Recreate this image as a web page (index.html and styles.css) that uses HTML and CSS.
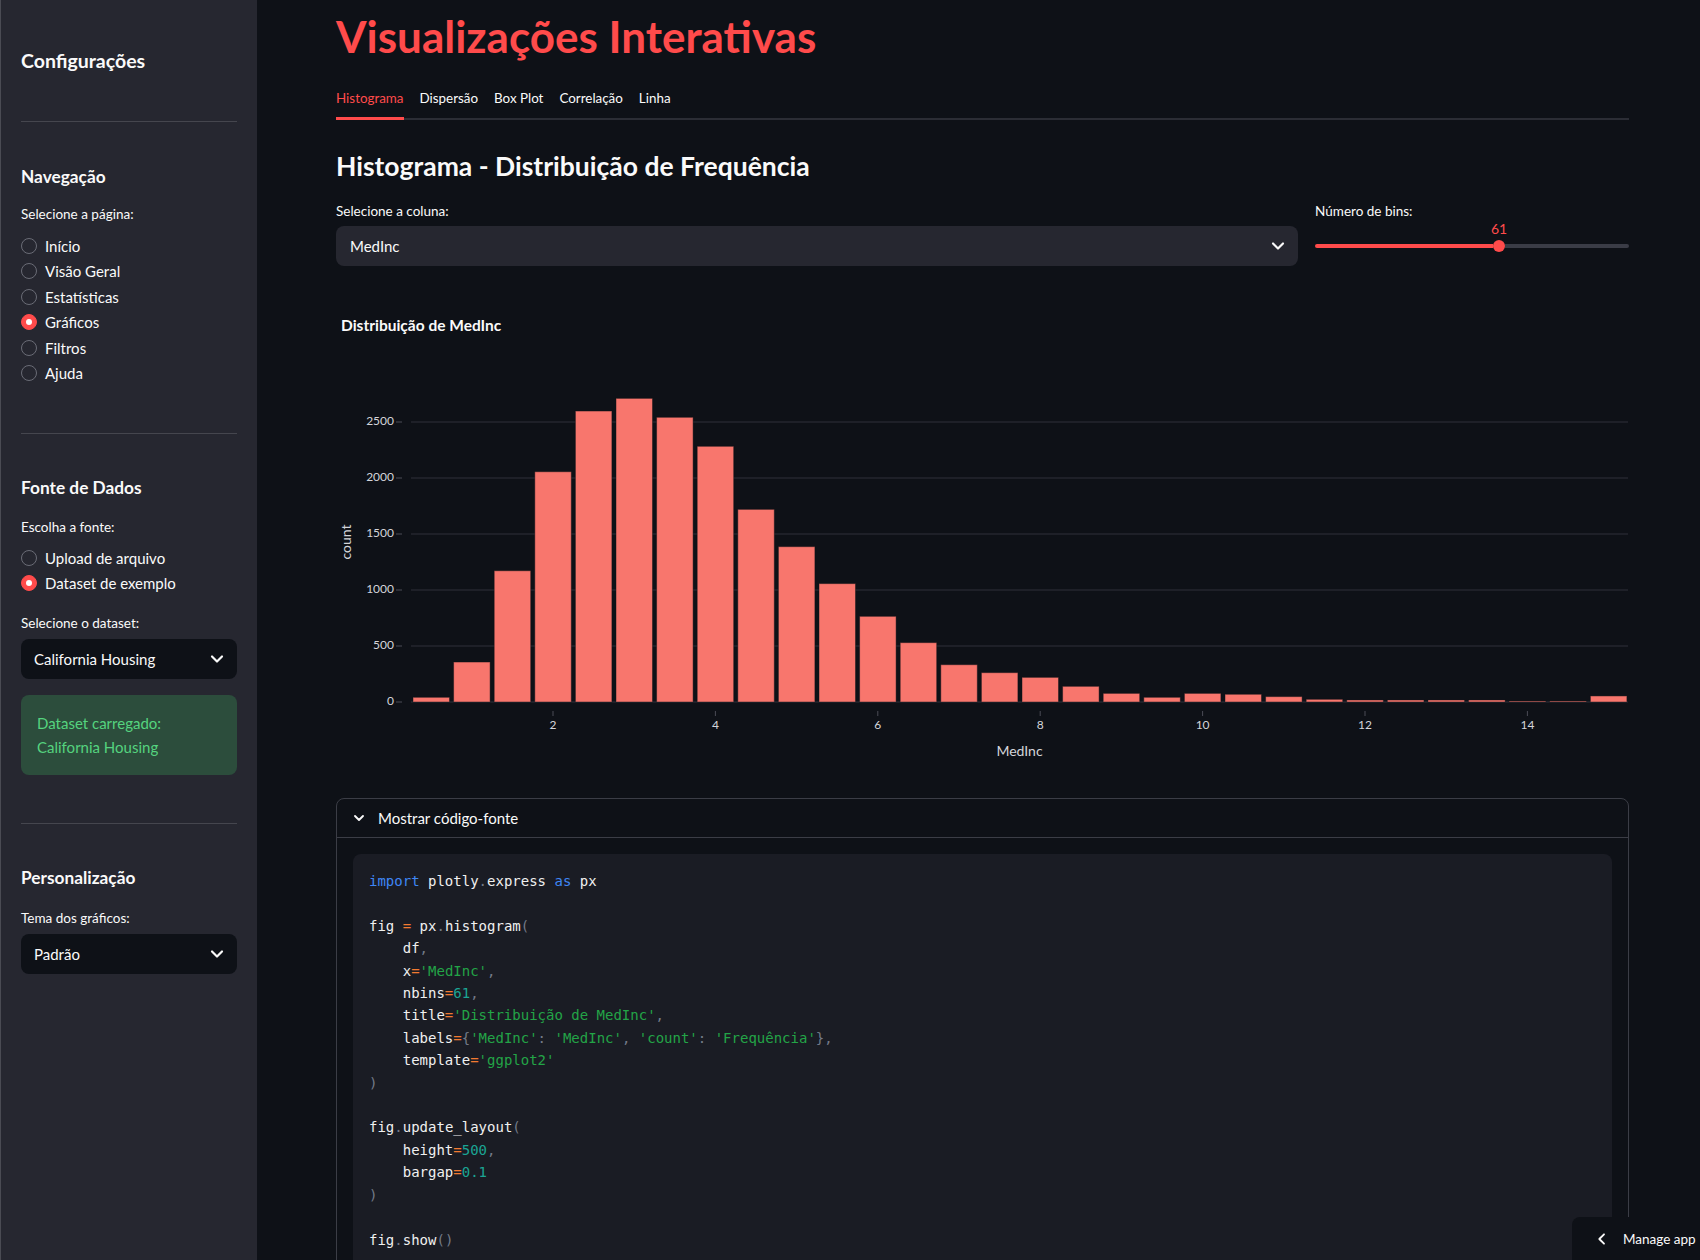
FILE: index.html
```html
<!DOCTYPE html>
<html lang="pt">
<head>
<meta charset="utf-8">
<title>Visualizações Interativas</title>
<link rel="stylesheet" href="styles.css">
</head>
<body>
<aside class="sidebar">
  <div class="sb-title">Configurações</div>
  <hr class="sb-hr hr1">
  <div class="sb-h2 h-nav">Navegação</div>
  <div class="sb-label lbl-nav">Selecione a página:</div>
  <div class="radios radios-nav">
    <div class="radio"><span class="dot"></span><span>Início</span></div>
    <div class="radio"><span class="dot"></span><span>Visão Geral</span></div>
    <div class="radio"><span class="dot"></span><span>Estatísticas</span></div>
    <div class="radio"><span class="dot on"></span><span>Gráficos</span></div>
    <div class="radio"><span class="dot"></span><span>Filtros</span></div>
    <div class="radio"><span class="dot"></span><span>Ajuda</span></div>
  </div>
  <hr class="sb-hr hr2">
  <div class="sb-h2 h-fonte">Fonte de Dados</div>
  <div class="sb-label lbl-fonte">Escolha a fonte:</div>
  <div class="radios radios-fonte">
    <div class="radio"><span class="dot"></span><span>Upload de arquivo</span></div>
    <div class="radio"><span class="dot on"></span><span>Dataset de exemplo</span></div>
  </div>
  <div class="sb-label lbl-dataset">Selecione o dataset:</div>
  <div class="select sb-select sel-dataset"><span>California Housing</span>
    <svg viewBox="0 0 24 24" width="20" height="20"><path d="M6 9l6 6 6-6" fill="none" stroke="#fafafa" stroke-width="2.6" stroke-linecap="round" stroke-linejoin="round"/></svg>
  </div>
  <div class="success">Dataset carregado:<br>California Housing</div>
  <hr class="sb-hr hr3">
  <div class="sb-h2 h-pers">Personalização</div>
  <div class="sb-label lbl-tema">Tema dos gráficos:</div>
  <div class="select sb-select sel-tema"><span>Padrão</span>
    <svg viewBox="0 0 24 24" width="20" height="20"><path d="M6 9l6 6 6-6" fill="none" stroke="#fafafa" stroke-width="2.6" stroke-linecap="round" stroke-linejoin="round"/></svg>
  </div>
</aside>

<main class="main">
  <h1 class="title">Visualizações Interativas</h1>
  <nav class="tabs">
    <div class="tab active">Histograma</div>
    <div class="tab">Dispersão</div>
    <div class="tab">Box Plot</div>
    <div class="tab">Correlação</div>
    <div class="tab">Linha</div>
  </nav>
  <h2 class="subtitle">Histograma - Distribuição de Frequência</h2>

  <div class="cols">
    <div class="col-main">
      <div class="w-label">Selecione a coluna:</div>
      <div class="select main-select"><span>MedInc</span>
        <svg viewBox="0 0 24 24" width="20" height="20"><path d="M6 9l6 6 6-6" fill="none" stroke="#fafafa" stroke-width="2.6" stroke-linecap="round" stroke-linejoin="round"/></svg>
      </div>
    </div>
    <div class="col-side">
      <div class="w-label">Número de bins:</div>
      <div class="slider-value-row"><div class="slider-value-box" style="width:58.6%"><span class="slider-value">61</span></div></div>
      <div class="slider-track">
        <div class="fill" style="width:calc(58.6% - 6px)"></div>
        <div class="thumb"></div>
        <div class="rest"></div>
      </div>
    </div>
  </div>

  <div class="chart">
    <svg viewBox="0 0 1293 500" width="1293" height="500" class="chart-svg">
      <text x="5" y="45" class="c-title">Distribuição de MedInc</text>
      <g class="grid">
        <line x1="75" x2="1292" y1="420" y2="420"/>
        <line x1="75" x2="1292" y1="364" y2="364"/>
        <line x1="75" x2="1292" y1="308" y2="308"/>
        <line x1="75" x2="1292" y1="252" y2="252"/>
        <line x1="75" x2="1292" y1="196" y2="196"/>
        <line x1="75" x2="1292" y1="140" y2="140"/>
      </g>
      <g class="ticks">
        <line x1="60" x2="66" y1="420" y2="420"/>
        <line x1="60" x2="66" y1="364" y2="364"/>
        <line x1="60" x2="66" y1="308" y2="308"/>
        <line x1="60" x2="66" y1="252" y2="252"/>
        <line x1="60" x2="66" y1="196" y2="196"/>
        <line x1="60" x2="66" y1="140" y2="140"/>
        <line x1="217" x2="217" y1="429" y2="434"/>
        <line x1="379.4" x2="379.4" y1="429" y2="434"/>
        <line x1="541.8" x2="541.8" y1="429" y2="434"/>
        <line x1="704.2" x2="704.2" y1="429" y2="434"/>
        <line x1="866.6" x2="866.6" y1="429" y2="434"/>
        <line x1="1029" x2="1029" y1="429" y2="434"/>
        <line x1="1191.4" x2="1191.4" y1="429" y2="434"/>
      </g>
      <g class="ylabels">
        <text x="58" y="420">0</text>
        <text x="58" y="364">500</text>
        <text x="58" y="308">1000</text>
        <text x="58" y="252">1500</text>
        <text x="58" y="196">2000</text>
        <text x="58" y="140">2500</text>
      </g>
      <g class="xlabels">
        <text x="217" y="444">2</text>
        <text x="379.4" y="444">4</text>
        <text x="541.8" y="444">6</text>
        <text x="704.2" y="444">8</text>
        <text x="866.6" y="444">10</text>
        <text x="1029" y="444">12</text>
        <text x="1191.4" y="444">14</text>
      </g>
      <text class="axis-title" x="683.5" y="470">MedInc</text>
      <text class="axis-title" transform="translate(11,260) rotate(-90)">count</text>
      <g class="bars" transform="translate(0,420) scale(1,-1)">
        <rect x="77.0" y="0" width="36.5" height="4.70"/>
        <rect x="117.6" y="0" width="36.5" height="39.98"/>
        <rect x="158.2" y="0" width="36.5" height="131.26"/>
        <rect x="198.8" y="0" width="36.5" height="230.27"/>
        <rect x="239.4" y="0" width="36.5" height="290.98"/>
        <rect x="280.0" y="0" width="36.5" height="303.63"/>
        <rect x="320.6" y="0" width="36.5" height="284.70"/>
        <rect x="361.2" y="0" width="36.5" height="255.70"/>
        <rect x="401.8" y="0" width="36.5" height="192.64"/>
        <rect x="442.4" y="0" width="36.5" height="155.34"/>
        <rect x="483.0" y="0" width="36.5" height="118.38"/>
        <rect x="523.6" y="0" width="36.5" height="85.68"/>
        <rect x="564.2" y="0" width="36.5" height="59.36"/>
        <rect x="604.8" y="0" width="36.5" height="37.30"/>
        <rect x="645.4" y="0" width="36.5" height="29.34"/>
        <rect x="686.0" y="0" width="36.5" height="24.64"/>
        <rect x="726.6" y="0" width="36.5" height="15.68"/>
        <rect x="767.2" y="0" width="36.5" height="8.62"/>
        <rect x="807.8" y="0" width="36.5" height="4.70"/>
        <rect x="848.4" y="0" width="36.5" height="8.62"/>
        <rect x="889.0" y="0" width="36.5" height="7.73"/>
        <rect x="929.6" y="0" width="36.5" height="5.38"/>
        <rect x="970.2" y="0" width="36.5" height="2.69"/>
        <rect x="1010.8" y="0" width="36.5" height="2.02"/>
        <rect x="1051.4" y="0" width="36.5" height="2.02"/>
        <rect x="1092.0" y="0" width="36.5" height="2.02"/>
        <rect x="1132.6" y="0" width="36.5" height="2.02"/>
        <rect x="1173.2" y="0" width="36.5" height="1.01"/>
        <rect x="1213.8" y="0" width="36.5" height="1.01"/>
        <rect x="1254.4" y="0" width="36.5" height="6.05"/>
      </g>
    </svg>
  </div>

  <section class="expander">
    <div class="exp-head">
      <svg viewBox="0 0 24 24" width="16" height="16"><path d="M6 9l6 6 6-6" fill="none" stroke="#fafafa" stroke-width="2.8" stroke-linecap="round" stroke-linejoin="round"/></svg>
      <span>Mostrar código-fonte</span>
    </div>
    <div class="exp-body">
<pre class="code"><span class="kw">import</span> plotly<span class="p">.</span>express <span class="kw">as</span> px

fig <span class="op">=</span> px<span class="p">.</span>histogram<span class="p">(</span>
    df<span class="p">,</span>
    x<span class="op">=</span><span class="str">'MedInc'</span><span class="p">,</span>
    nbins<span class="op">=</span><span class="num">61</span><span class="p">,</span>
    title<span class="op">=</span><span class="str">'Distribuição de MedInc'</span><span class="p">,</span>
    labels<span class="op">=</span><span class="p">{</span><span class="str">'MedInc'</span><span class="p">:</span> <span class="str">'MedInc'</span><span class="p">,</span> <span class="str">'count'</span><span class="p">:</span> <span class="str">'Frequência'</span><span class="p">},</span>
    template<span class="op">=</span><span class="str">'ggplot2'</span>
<span class="p">)</span>

fig<span class="p">.</span>update_layout<span class="p">(</span>
    height<span class="op">=</span><span class="num">500</span><span class="p">,</span>
    bargap<span class="op">=</span><span class="num">0.1</span>
<span class="p">)</span>

fig<span class="p">.</span>show<span class="p">()</span>
</pre>
    </div>
  </section>
</main>

<div class="manage">
  <svg viewBox="0 0 24 24" width="16" height="16"><path d="M15 5l-7 7 7 7" fill="none" stroke="#fafafa" stroke-width="2.8" stroke-linecap="round" stroke-linejoin="round"/></svg>
  <span>Manage app</span>
</div>
</body>
</html>
```

FILE: styles.css
```css
* { box-sizing: border-box; }
html, body { margin: 0; height: 1260px; overflow: hidden; }
body {
  background: #0e1117;
  color: #fafafa;
  font-family: Lato, "Noto Sans", sans-serif;
  display: flex;
}

/* Sidebar */
.sidebar {
  width: 257px;
  flex: none;
  background: #262730;
  border-left: 1px solid #4a4b53;
  padding: 45px 20px 0 20px;
}
.sb-title { font-size: 19.5px; font-weight: 700; line-height: 32px; }
.sb-hr { border: 0; border-top: 1px solid #45464e; margin: 0; }
.hr1 { margin-top: 44px; }
.sb-h2 { font-size: 17.3px; font-weight: 700; line-height: 28px; }
.h-nav { margin-top: 41px; }
.sb-label { font-size: 13.5px; line-height: 20px; }
.lbl-nav { margin-top: 13px; }
.radios { display: flex; flex-direction: column; }
.radio { display: flex; align-items: center; gap: 8px; font-size: 15px; height: 25.5px; }
.radios-nav { margin-top: 9px; }
.dot {
  width: 16px; height: 16px; border-radius: 50%;
  border: 1px solid #6a6c76;
  display: flex; align-items: center; justify-content: center;
  flex: none;
}
.dot.on { background: #ff4b4b; border-color: #ff4b4b; }
.dot.on::after { content: ""; width: 6px; height: 6px; border-radius: 50%; background: #fff; }
.hr2 { margin-top: 47px; }
.h-fonte { margin-top: 40px; }
.lbl-fonte { margin-top: 15px; }
.radios-fonte { margin-top: 8px; }
.lbl-dataset { margin-top: 17px; }
.select {
  display: flex; align-items: center; justify-content: space-between;
  border-radius: 8px;
  padding: 0 10px 0 13px;
  font-size: 15px;
}
.sb-select { height: 40px; background: #0e1117; }
.sel-dataset { margin-top: 6px; }
.success {
  margin-top: 16px;
  background: #2c4d3c;
  color: #55d37f;
  border-radius: 8px;
  padding: 16px 16px;
  font-size: 15px;
  line-height: 24px;
}
.hr3 { margin-top: 48px; }
.h-pers { margin-top: 40px; }
.lbl-tema { margin-top: 15.5px; }
.sel-tema { margin-top: 6.5px; }

/* Main */
.main {
  flex: 1;
  min-width: 0;
  padding: 10px 71px 0 79px;
}
.title {
  margin: 0;
  font-size: 44px;
  line-height: 53px;
  font-weight: 700;
  color: #ff4b4b;
}
.tabs {
  margin-top: 17px;
  display: flex;
  gap: 16px;
  height: 40px;
  align-items: flex-end;
  border-bottom: 2px solid #2b2d35;
}
.tab {
  font-size: 13.4px;
  line-height: 20px;
  padding-bottom: 9px;
  border-bottom: 3px solid transparent;
  margin-bottom: -2px;
}
.tab.active { color: #ff4b4b; border-bottom-color: #ff4b4b; }
.subtitle {
  margin: 29px 0 0 0;
  font-size: 26.5px;
  line-height: 34px;
  font-weight: 700;
}
.cols {
  display: grid;
  grid-template-columns: calc((100% - 17px) * 0.754) 1fr;
  gap: 17px;
  margin-top: 17px;
}
.w-label { font-size: 13.5px; line-height: 22px; margin-bottom: 4px; }
.main-select { height: 40px; background: #262730; padding-left: 14px; }
.slider-value-row { height: 16px; margin-top: -8px; }
.slider-value-box { text-align: right; }
.slider-value {
  display: inline-block;
  transform: translateX(50%);
  font-size: 14px; line-height: 16px; color: #ff4b4b;
}
.slider-track { display: flex; align-items: center; height: 12px; margin-top: 6px; }
.fill { height: 4px; background: #ff4b4b; border-radius: 2px 0 0 2px; }
.thumb { width: 12px; height: 12px; border-radius: 50%; background: #ff4b4b; flex: none; }
.rest { flex: 1; height: 4px; background: #3a3c46; border-radius: 0 2px 2px 0; }

.chart { margin-top: 16px; height: 500px; }
.chart-svg { display: block; font-family: Lato, "Noto Sans", sans-serif; }
.c-title { font-size: 15.5px; font-weight: 700; fill: #fafafa; dominant-baseline: middle; }
.grid line { stroke: #2f313a; stroke-width: 1; }
.ticks line { stroke: #4a4c56; stroke-width: 1; }
.ylabels text { font-size: 12px; fill: #d4d5da; text-anchor: end; dominant-baseline: middle; }
.xlabels text { font-size: 12px; fill: #d4d5da; text-anchor: middle; dominant-baseline: middle; }
.axis-title { font-size: 14px; fill: #d4d5da; text-anchor: middle; dominant-baseline: middle; }
.bars rect { fill: #f8766d; stroke: #0e1117; stroke-opacity: 0.45; stroke-width: 1; }

.expander {
  margin-top: 16px;
  border: 1px solid #3b3d46;
  border-radius: 8px;
}
.exp-head {
  height: 39px;
  display: flex;
  align-items: center;
  gap: 11px;
  padding-left: 14px;
  border-bottom: 1px solid #3b3d46;
  font-size: 15px;
}
.exp-head svg { flex: none; }
.exp-body { padding: 16px; }
.code {
  margin: 0;
  background: #1a1c24;
  border-radius: 8px;
  padding: 16px;
  font-family: "DejaVu Sans Mono", "Liberation Mono", monospace;
  font-size: 14px;
  line-height: 22.4px;
  color: #f0f0f0;
  white-space: pre;
}
.kw { color: #3f86f5; }
.p { color: #737a88; }
.op { color: #f27a31; }
.str { color: #23a447; }
.num { color: #1ba594; }

.manage {
  position: fixed;
  right: 0;
  bottom: 0;
  width: 128px;
  height: 43px;
  background: #0e1117;
  border-top-left-radius: 8px;
  display: flex;
  align-items: center;
  gap: 13px;
  padding-left: 22px;
  font-size: 13.5px;
  white-space: nowrap;
}
.manage svg { flex: none; }
```
